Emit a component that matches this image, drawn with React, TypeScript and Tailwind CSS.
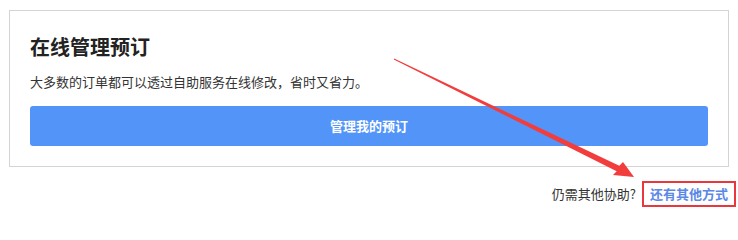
export default function App() {
  return (
    <div
      className="relative h-[212px] w-[738px] bg-white pt-[10px] text-[#333]"
      style={{ fontFamily: '"Noto Sans CJK SC", "Noto Sans", sans-serif' }}
    >
      {/* card */}
      <div className="ml-[9px] w-[720px] border border-[#d4d4d4] px-5 pt-[22px] pb-5">
        <h2 className="text-[20px] leading-[28px] font-bold text-[#222]">
          在线管理预订
        </h2>
        <p className="mt-[11px] text-[13px] leading-[20px] text-[#333]">
          大多数的订单都可以透过自助服务在线修改，省时又省力。
        </p>
        <button className="mt-[14px] h-10 w-full rounded-[3px] bg-[#5294f8] text-[13px] font-bold text-white">
          管理我的预订
        </button>
      </div>

      {/* help row */}
      <div className="mt-[14px] flex items-center justify-end pr-[2px] text-[13px]">
        <span className="mr-[6px] text-[#333]">仍需其他协助?</span>
        <a className="border-2 border-[#e8383d] px-[6px] leading-[22px] font-bold text-[#5b87e6]">
          还有其他方式
        </a>
      </div>

      {/* annotation arrow */}
      <svg
        className="pointer-events-none absolute top-0 left-0"
        width="738"
        height="212"
        viewBox="0 0 738 212"
      >
        <polygon
          fill="#f23d3d"
          points="394.2,58.6 619.3,165.8 623,162 634,177 613,175 616.7,171.2 393.8,59.4"
        />
      </svg>
    </div>
  );
}
